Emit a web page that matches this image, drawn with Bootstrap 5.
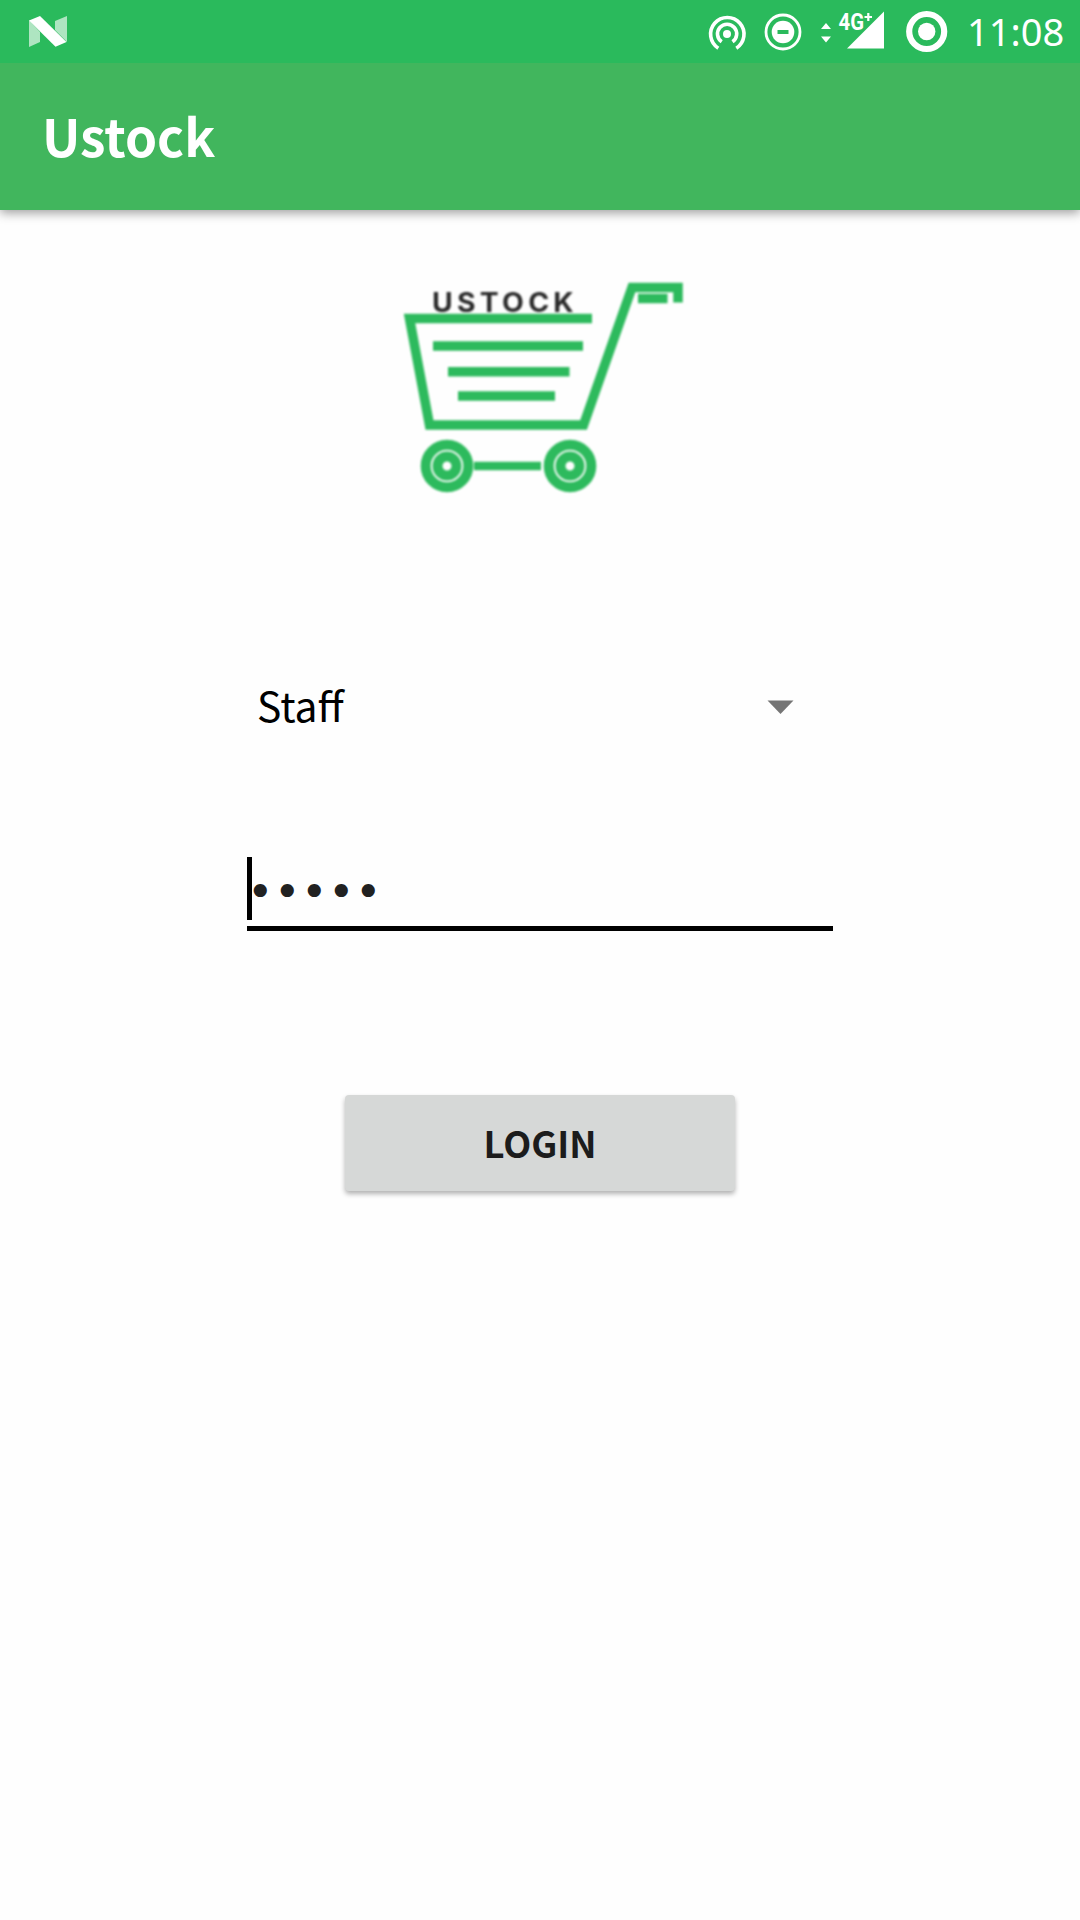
<!DOCTYPE html>
<html lang="en">
<head>
<meta charset="utf-8">
<meta name="viewport" content="width=device-width, initial-scale=1">
<title>Ustock</title>
<link href="https://cdn.jsdelivr.net/npm/bootstrap@5.3.0/dist/css/bootstrap.min.css" rel="stylesheet">
<style>
body{background:#fefefe;font-family:"Noto Sans CJK SC","Noto Sans",sans-serif;min-height:1920px;overflow-x:hidden}
svg{display:block;flex:none}
.status-bar{height:63px;background:#2aba5c;padding:0 16px 0 28px}
.status-icons{height:63px}
.clock{font:38px/1 "Noto Sans",sans-serif;margin-left:19px;width:97px;white-space:nowrap;padding-bottom:1px}
.app-bar{height:147px;background:#41b65d;padding:0 0 0 42px;box-shadow:0 3px 10px rgba(0,0,0,.38);clip-path:inset(0 0 -20px 0)}
.app-title{font-size:51.4px;line-height:1;font-weight:700;color:#fff;padding:0 0 3px}
.login-form{width:586px;padding-top:60px}
.logo-box{margin-left:143px}
.role-picker{margin-top:152px;height:90px;padding:0 39px 0 10px;font-size:40.8px;line-height:1;color:#000;border-radius:0;background:none;border:0}
.role-name{padding-bottom:4px}
.pin-field{margin-top:105px;height:74px;border-bottom:5px solid #000;color:#212121}
.caret-bar{width:5px;height:63px;background:#000}
.pin-dots{font:45px/69px "DejaVu Sans",sans-serif;letter-spacing:.45px;margin-left:-5px}
.login-btn{width:390px;height:96px;margin-top:164px;padding:0 0 2px;background:#d6d8d7;color:#1c1c1c;border:0;border-radius:4px;font-size:36.4px;line-height:1;font-weight:700;box-shadow:0 3px 5px rgba(0,0,0,.3)}
.logo-art{filter:blur(.8px)}
</style>
<script src="https://cdn.jsdelivr.net/npm/bootstrap@5.3.0/dist/js/bootstrap.bundle.min.js"></script>
</head>
<body>
<header class="status-bar d-flex justify-content-between text-white">
  <svg width="40" height="63" viewBox="28 0 40 63" fill="#fff"><path opacity=".62" d="M29 20l11 12v10l-11 5zM55 21l12-5v26l-12-12z"/><path d="M29 20.500l11-4.500 26.500 26-11 4.800z"/></svg>
  <div class="status-icons d-flex align-items-center">
    <svg width="242" height="63" viewBox="706 0 242 63">
      <g fill="none" stroke="#fff"><path stroke-width="3.600" d="M718.300 48.200A16.700 16.700 0 1 1 736.300 48.200"/><path stroke-width="3.600" d="M721.700 41.800A9.600 9.600 0 1 1 732.500 41.800"/><circle cx="783" cy="32" r="17" stroke-width="2.800"/><circle cx="926.700" cy="31.500" r="17.500" stroke-width="6.200"/></g>
      <g fill="#fff"><circle cx="727" cy="34" r="4"/><circle cx="783" cy="32" r="11.300"/><path d="M821 29l5-6 5 6zM821 36.500h10l-5 6zM847 48.500h37v-37z"/><circle cx="926.700" cy="31.500" r="8.700"/></g>
      <path stroke="#2aba5c" stroke-width="4" d="M777.500 32h11"/>
      <text x="838.500" y="30" fill="#fff" font-family="Roboto" font-weight="700" font-size="24" textLength="25.500" lengthAdjust="spacingAndGlyphs">4G</text>
      <path stroke="#fff" stroke-width="2.200" d="M864.500 17h7.500M868.300 13v8"/>
    </svg>
    <span class="clock">11:08</span>
  </div>
</header>
<nav class="app-bar navbar position-relative"><h1 class="app-title mb-0">Ustock</h1></nav>
<main class="login-form mx-auto d-flex flex-column">
  <div class="logo-box">
    <svg class="logo-art" width="304" height="240" viewBox="390 270 304 240">
      <g fill="none" stroke="#2dba5d">
        <path stroke-width="9.500" d="M592 318.500H409.500L429.500 425H583.500L632 287.500H678V302.500M638 298.500H667.500M433 346H583M448 371.700H569.500M458 396H555"/>
        <path stroke-width="8.500" d="M474 466h67"/>
        <g><circle cx="447" cy="466" r="21.300" stroke-width="10"/><circle cx="447" cy="466" r="9.500" stroke-width="10"/><circle cx="570" cy="466" r="21.300" stroke-width="10"/><circle cx="570" cy="466" r="9.500" stroke-width="10"/></g>
      </g>
      <text x="432" y="312" fill="#2a2a2a" font-family="Inter" font-weight="700" font-size="26.500" letter-spacing="4" textLength="146" lengthAdjust="spacingAndGlyphs">USTOCK</text>
    </svg>
  </div>
  <button class="role-picker btn d-flex align-items-center justify-content-between" type="button"><span class="role-name">Staff</span><svg width="27" height="16" viewBox="0 0 27 16"><path fill="#757575" d="M.5 1.500h26l-13 13.500z"/></svg></button>
  <div class="pin-field d-flex align-items-start"><span class="caret-bar"></span><span class="pin-dots">•••••</span></div>
  <button class="login-btn btn mx-auto" type="button">LOGIN</button>
</main>
</body>
</html>
